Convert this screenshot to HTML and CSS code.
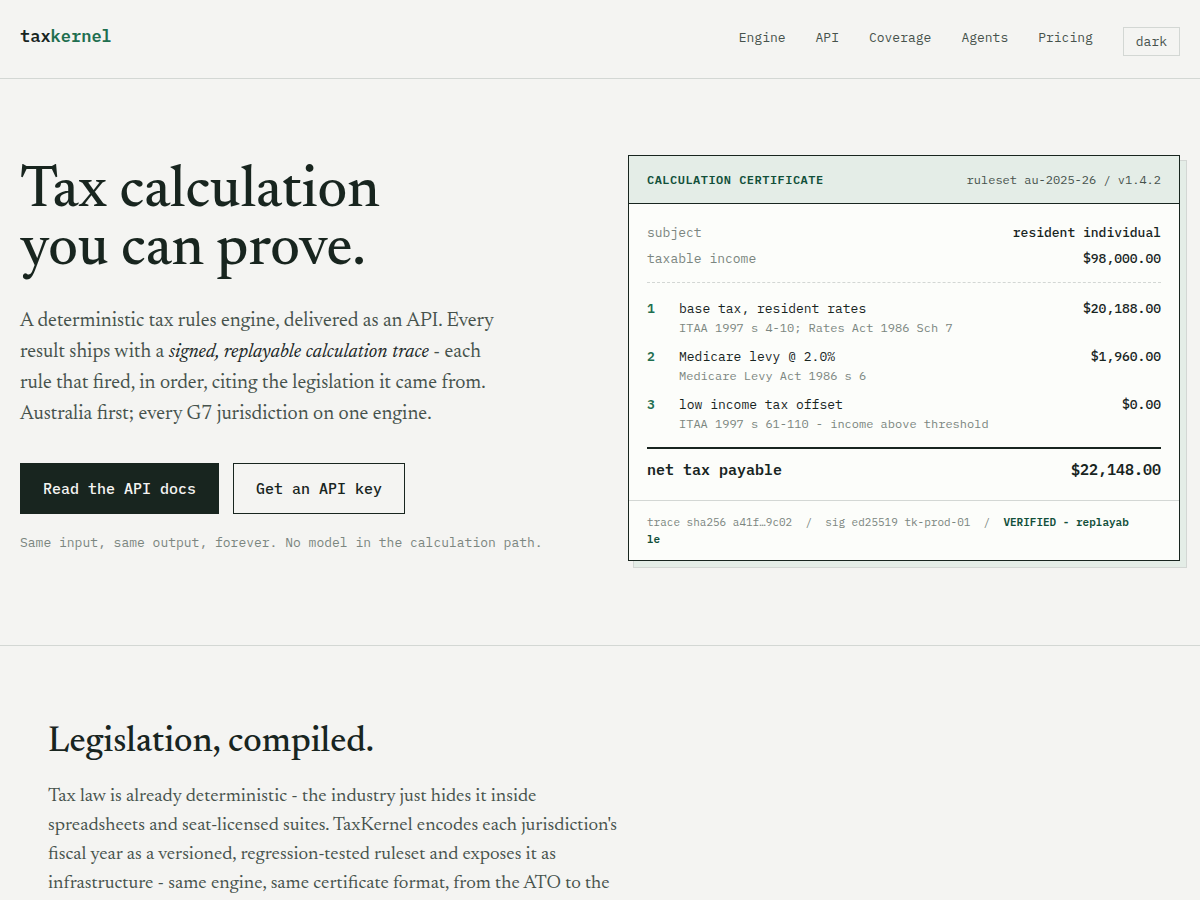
FILE: index.html
```html
<!DOCTYPE html>
<html lang="en">
<head>
<meta charset="UTF-8">
<meta name="viewport" content="width=device-width,initial-scale=1.0">
<title>taxkernel</title>
<link rel="stylesheet" href="styles.css">
</head>
<body>
	<header class="site-header">
		<a class="logo" href="#">tax<span>kernel</span></a>
		<nav class="nav">
			<a href="#engine">Engine</a>
			<a href="#api">API</a>
			<a href="#coverage">Coverage</a>
			<a href="#agents">Agents</a>
			<a href="#pricing">Pricing</a>
			<button type="button" class="theme">dark</button>
		</nav>
	</header>

	<main>
		<section class="hero">
			<div class="intro">
				<h1>Tax calculation<br>you can prove.</h1>
				<p class="lede">A deterministic tax rules engine, delivered as an API. Every<br>
					result ships with a <em>signed, replayable calculation trace</em> - each<br>
					rule that fired, in order, citing the legislation it came from.<br>
					Australia first; every G7 jurisdiction on one engine.</p>
				<div class="actions">
					<a class="btn btn-solid" href="#docs">Read the API docs</a>
					<a class="btn" href="#key">Get an API key</a>
				</div>
				<p class="note">Same input, same output, forever. No model in the calculation path.</p>
			</div>

			<div class="cert">
				<div class="cert-head">
					<strong>CALCULATION CERTIFICATE</strong>
					<span>ruleset au-2025-26 / v1.4.2</span>
				</div>
				<div class="cert-body">
					<dl class="facts">
						<div><dt>subject</dt><dd>resident individual</dd></div>
						<div><dt>taxable income</dt><dd>$98,000.00</dd></div>
					</dl>
					<div class="steps">
						<div class="step">
							<b class="num">1</b>
							<div>base tax, resident rates<small>ITAA 1997 s 4-10; Rates Act 1986 Sch 7</small></div>
							<span class="amount">$20,188.00</span>
						</div>
						<div class="step">
							<b class="num">2</b>
							<div>Medicare levy @ 2.0%<small>Medicare Levy Act 1986 s 6</small></div>
							<span class="amount">$1,960.00</span>
						</div>
						<div class="step">
							<b class="num">3</b>
							<div>low income tax offset<small>ITAA 1997 s 61-110 - income above threshold</small></div>
							<span class="amount">$0.00</span>
						</div>
					</div>
					<div class="total"><span>net tax payable</span><span>$22,148.00</span></div>
				</div>
				<div class="cert-foot">trace sha256 a41f…9c02 &nbsp;/&nbsp; sig ed25519 tk-prod-01 &nbsp;/&nbsp; <b>VERIFIED - replayab<br>le</b></div>
			</div>
		</section>

		<section class="section" id="engine">
			<h2>Legislation, compiled.</h2>
			<p>Tax law is already deterministic - the industry just hides it inside<br>
				spreadsheets and seat-licensed suites. TaxKernel encodes each jurisdiction's<br>
				fiscal year as a versioned, regression-tested ruleset and exposes it as<br>
				infrastructure - same engine, same certificate format, from the ATO to the</p>
		</section>
	</main>
</body>
</html>
```

FILE: styles.css
```css
:root {
	--bg: #f4f4f2;
	--card: #fcfdfa;
	--ink: #18251f;
	--text: #46524c;
	--faint: #7b8680;
	--green: #1f6f50;
	--deep: #12503a;
	--soft: #e4ede7;
	--line: #d3d7d4;
	--mono: "IBM Plex Mono", "Liberation Mono", monospace;
	--serif: "Newsreader", "Liberation Serif", serif;
}
* {
	box-sizing: border-box;
}
body {
	margin: 0;
	background: var(--bg);
	color: var(--ink);
	font-family: var(--serif);
}
h1, h2, p, dl, dd {
	margin: 0;
}
h1, h2 {
	font-weight: 500;
}
a {
	color: inherit;
	text-decoration: none;
}

/* header */
.site-header {
	display: flex;
	justify-content: space-between;
	align-items: flex-start;
	padding: 27px 20px 22px;
	border-bottom: 1px solid var(--line);
	font-family: var(--mono);
}
.logo {
	font-size: 17px;
	font-weight: 600;
	line-height: 18px;
}
.logo span {
	color: var(--green);
}
.nav {
	display: flex;
	gap: 30px;
	font-size: 13px;
	line-height: 22px;
	color: var(--text);
}
.theme {
	height: 29px;
	padding: 0 12px;
	border: 1px solid var(--line);
	background: none;
	color: var(--text);
	font: 13px var(--mono);
}

/* hero */
.hero {
	display: grid;
	grid-template-columns: 1fr 1fr;
	gap: 56px;
	align-items: center;
	padding: 76px 20px 84px;
	border-bottom: 1px solid var(--line);
}
h1 {
	font-size: 58px;
	line-height: 58px;
}
.lede {
	margin-top: 27px;
	font-size: 20px;
	line-height: 31px;
	color: var(--text);
	white-space: nowrap;
}
.lede em {
	color: var(--ink);
}
.actions {
	display: flex;
	gap: 14px;
	margin-top: 33px;
}
.btn {
	padding: 15px 22px;
	border: 1px solid var(--ink);
	font-family: var(--mono);
	font-size: 15px;
	font-weight: 500;
	line-height: 19px;
}
.btn-solid {
	background: var(--ink);
	color: var(--bg);
}
.note {
	margin-top: 17px;
	font-family: var(--mono);
	font-size: 13px;
	line-height: 23px;
	color: var(--faint);
}

/* certificate */
.cert {
	border: 1px solid var(--ink);
	background: var(--card);
	box-shadow: 6px 6px 0 var(--soft), 6px 6px 0 1px var(--line);
	font-family: var(--mono);
	font-size: 13px;
	line-height: 20px;
}
.cert-head {
	display: flex;
	justify-content: space-between;
	padding: 14px 18px 13px;
	border-bottom: 1px solid var(--ink);
	background: var(--soft);
	color: var(--text);
	font-size: 12px;
}
.cert-head strong {
	color: var(--deep);
	font-weight: 600;
	letter-spacing: 0.04em;
}
.cert-body {
	padding: 16px 18px 15px;
}
.facts {
	padding-bottom: 10px;
	border-bottom: 1px dashed var(--line);
}
.facts div {
	display: flex;
	justify-content: space-between;
	padding: 3px 0;
}
.facts dt {
	color: var(--faint);
}
.facts dd, .amount {
	font-weight: 500;
}
.steps {
	display: grid;
	gap: 10px;
	padding: 16px 0 14px;
}
.step {
	display: grid;
	grid-template-columns: 32px 1fr auto;
}
.step small {
	display: block;
	color: var(--faint);
	font-size: 12px;
	line-height: 18px;
}
.num {
	color: var(--green);
	font-weight: 600;
}
.total {
	display: flex;
	justify-content: space-between;
	padding: 11px 0 5px;
	border-top: 2px solid var(--ink);
	font-size: 15px;
	font-weight: 600;
}
.cert-foot {
	padding: 13px 18px 12px;
	border-top: 1px solid var(--line);
	color: var(--faint);
	font-size: 11px;
	line-height: 17px;
}
.cert-foot b {
	color: var(--deep);
	font-weight: 600;
}

/* text sections */
.section {
	padding: 75px 48px 0;
}
h2 {
	font-size: 36px;
	line-height: 44px;
}
.section p {
	margin-top: 17px;
	font-size: 19px;
	line-height: 29px;
	color: var(--text);
	white-space: nowrap;
}
```
